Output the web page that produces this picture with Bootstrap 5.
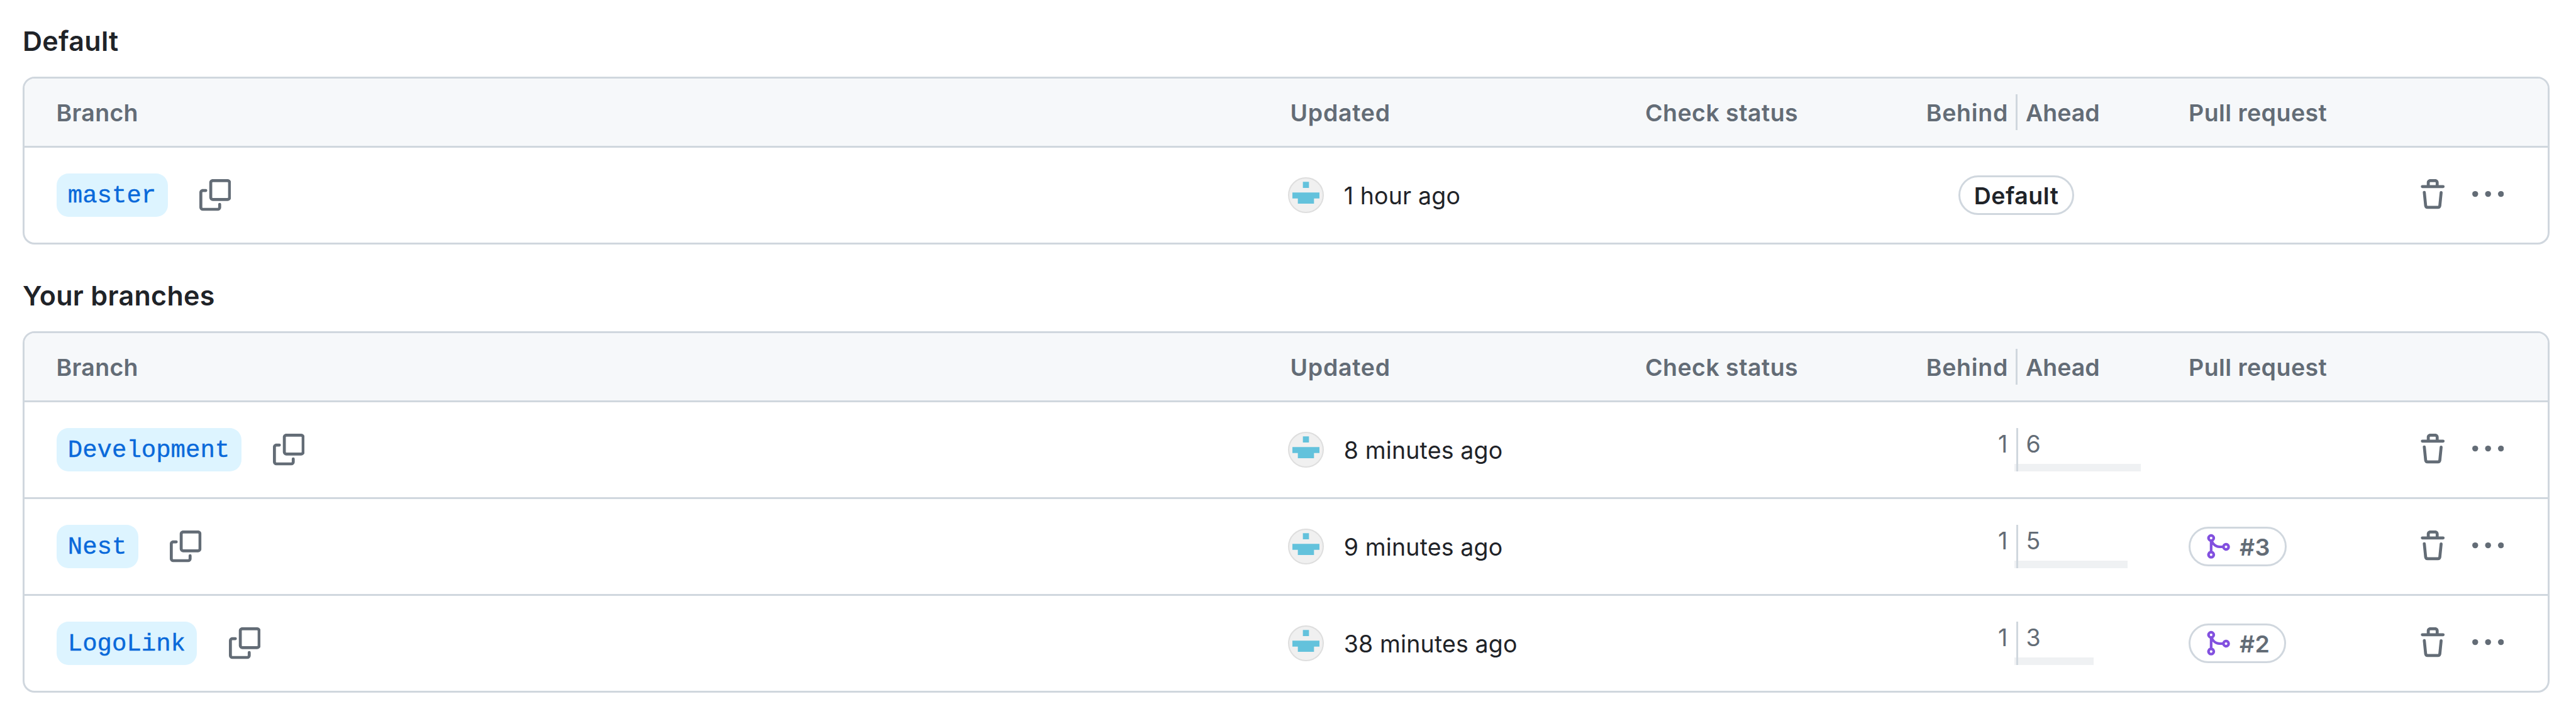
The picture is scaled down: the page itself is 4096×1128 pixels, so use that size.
<!DOCTYPE html>
<html lang="en">
<head>
<meta charset="utf-8">
<meta name="viewport" content="width=device-width, initial-scale=1">
<title>Branches</title>
<link href="https://cdn.jsdelivr.net/npm/bootstrap@5.3.0/dist/css/bootstrap.min.css" rel="stylesheet">
<style>
  :root { --line: #d0d7de; --muted: #636c76; --ink: #1f2328; }
  body { font-family: Inter, "Liberation Sans", sans-serif; font-size: 37.5px; line-height: 50px; letter-spacing: .15px; color: var(--ink); background: #fff; }
  .page { padding: 35px 42px 0 36px; }
  .section-title { font-size: 43px; line-height: 60px; font-weight: 600; letter-spacing: .3px; margin: 0 0 27px; }
  .branch-section + .branch-section { margin-top: 51px; }
  .branch-box { border: 3px solid var(--line); border-radius: 19px; }
  .branch-head { height: 110px; background: #f6f8fa; color: var(--muted); font-weight: 600; letter-spacing: .45px; border-bottom: 3px solid var(--line); }
  .branch-line { height: 151px; }
  .branch-line + .branch-line { height: 154px; border-top: 3px solid var(--line); }
  .c-name { width: 2009px; padding-left: 50.5px; }
  .c-updated { width: 568px; }
  .c-check { width: 316px; }
  .c-compare { width: 548px; }
  .c-pull { width: 363.5px; }
  .branch-head .c-updated { padding-left: 3.5px; letter-spacing: .7px; }
  .branch-head .c-name { letter-spacing: .3px; }
  .cell-text { padding-top: 2px; }
  .chip { font-family: "Liberation Mono", monospace; font-size: 39px; line-height: 50px; letter-spacing: 0; height: 69px; padding: 11px 18.3px 8px; border-radius: 19px; background: #ddf4ff; color: #0969da; text-decoration: none; -webkit-text-stroke: .4px #0969da; }
  .oct { width: 50.4px; height: 50.4px; fill: var(--muted); display: block; flex: none; }
  .copy-btn { margin-left: 50.4px; }
  .oct-merge { width: 44.6px; height: 44.6px; fill: #8250df; margin-right: 12.5px; }
  .who { width: 57px; height: 57px; margin-right: 31.7px; display: block; flex: none; }
  .pill { height: 63px; border: 3px solid var(--line); border-radius: 32px; font-weight: 600; }
  .pill-default { padding: 0 22px; letter-spacing: .5px; }
  .pill-pr { padding: 0 23px 0 21px; color: var(--muted); text-decoration: none; letter-spacing: .3px; }
  .half { width: 274px; }
  .half-right { border-left: 3px solid var(--line); }
  .branch-head .half { height: 57px; line-height: 59px; }
  .branch-head .half-left { width: 273px; padding-right: 12px; letter-spacing: .7px; }
  .branch-head .half-right { padding-left: 13px; letter-spacing: 0; }
  .branch-line .half { height: 69px; color: var(--muted); }
  .num-left { padding-right: 13.5px; padding-top: 1px; }
  .num-right { padding-left: 12.5px; padding-top: 1px; }
  .meter { height: 12.5px; background: #eff1f3; }
  .actions { gap: 37.4px; margin-left: -.5px; }
</style>
<script src="https://cdn.jsdelivr.net/npm/bootstrap@5.3.0/dist/js/bootstrap.bundle.min.js"></script>
</head>
<body>
<svg class="d-none" aria-hidden="true">
  <symbol id="i-copy" viewBox="0 0 16 16"><path d="M0 6.75C0 5.784.784 5 1.75 5h1.5a.75.75 0 0 1 0 1.5h-1.5a.25.25 0 0 0-.25.25v7.5c0 .138.112.25.25.25h7.5a.25.25 0 0 0 .25-.25v-1.5a.75.75 0 0 1 1.5 0v1.5A1.75 1.75 0 0 1 9.25 16h-7.5A1.75 1.75 0 0 1 0 14.25Z"/><path d="M5 1.75C5 .784 5.784 0 6.75 0h7.5C15.216 0 16 .784 16 1.75v7.5A1.75 1.75 0 0 1 14.25 11h-7.5A1.75 1.75 0 0 1 5 9.25Zm1.75-.25a.25.25 0 0 0-.25.25v7.5c0 .138.112.25.25.25h7.5a.25.25 0 0 0 .25-.25v-7.5a.25.25 0 0 0-.25-.25Z"/></symbol>
  <symbol id="i-trash" viewBox="0 0 16 16"><path d="M11 1.75V3h2.25a.75.75 0 0 1 0 1.5H2.75a.75.75 0 0 1 0-1.5H5V1.75C5 .784 5.784 0 6.75 0h2.5C10.216 0 11 .784 11 1.75ZM4.496 6.675l.66 6.6a.25.25 0 0 0 .249.225h5.19a.25.25 0 0 0 .249-.225l.66-6.6a.75.75 0 0 1 1.492.149l-.66 6.6A1.748 1.748 0 0 1 10.595 15h-5.19a1.75 1.75 0 0 1-1.741-1.575l-.66-6.6a.75.75 0 1 1 1.492-.15ZM6.5 1.75V3h3V1.75a.25.25 0 0 0-.25-.25h-2.5a.25.25 0 0 0-.25.25Z"/></symbol>
  <symbol id="i-more" viewBox="0 0 16 16"><circle cx="1.5" cy="7.5" r="1.5"/><circle cx="8" cy="7.5" r="1.5"/><circle cx="14.5" cy="7.5" r="1.5"/></symbol>
  <symbol id="i-merge" viewBox="0 0 16 16"><path d="M5.45 5.154A4.25 4.25 0 0 0 9.25 7.5h1.378a2.251 2.251 0 1 1 0 1.5H9.25A5.734 5.734 0 0 1 5 7.123v3.505a2.25 2.25 0 1 1-1.5 0V5.372a2.25 2.25 0 1 1 1.95-.218ZM4.25 13.5a.75.75 0 1 0 0-1.5.75.75 0 0 0 0 1.5Zm8.5-4.5a.75.75 0 1 0 0-1.5.75.75 0 0 0 0 1.5ZM5 3.25a.75.75 0 1 0-1.5 0 .75.75 0 0 0 1.5 0Z"/></symbol>
  <symbol id="i-who" viewBox="0 0 171 171"><circle cx="85.5" cy="85.5" r="82.5" fill="#f0f0f0" stroke="#dedede" stroke-width="6"/><path fill="#63c2dc" d="M71 22h29v29H71zM21 73h129v28h-26v25H47v-25H21z"/></symbol>
</svg>
<main class="page">
  <section class="branch-section">
    <h2 class="section-title">Default</h2>
    <div class="branch-box overflow-hidden">
      <div class="branch-head d-flex align-items-center">
        <div class="c-name cell-text">Branch</div>
        <div class="c-updated cell-text">Updated</div>
        <div class="c-check cell-text">Check status</div>
        <div class="c-compare d-flex"><div class="half half-left text-end">Behind</div><div class="half half-right">Ahead</div></div>
        <div class="c-pull cell-text">Pull request</div>
      </div>
      <div class="branch-line d-flex align-items-center">
        <div class="c-name d-flex align-items-center"><a class="chip" href="#">master</a><svg class="oct copy-btn"><use href="#i-copy"/></svg></div>
        <div class="c-updated d-flex align-items-center"><svg class="who"><use href="#i-who"/></svg><span class="cell-text">1 hour ago</span></div>
        <div class="c-check"></div>
        <div class="c-compare d-flex justify-content-center"><span class="pill pill-default d-flex align-items-center"><span class="cell-text">Default</span></span></div>
        <div class="c-pull"></div>
        <div class="actions d-flex"><svg class="oct"><use href="#i-trash"/></svg><svg class="oct"><use href="#i-more"/></svg></div>
      </div>
    </div>
  </section>
  <section class="branch-section">
    <h2 class="section-title">Your branches</h2>
    <div class="branch-box overflow-hidden">
      <div class="branch-head d-flex align-items-center">
        <div class="c-name cell-text">Branch</div>
        <div class="c-updated cell-text">Updated</div>
        <div class="c-check cell-text">Check status</div>
        <div class="c-compare d-flex"><div class="half half-left text-end">Behind</div><div class="half half-right">Ahead</div></div>
        <div class="c-pull cell-text">Pull request</div>
      </div>
      <div class="branch-line d-flex align-items-center">
        <div class="c-name d-flex align-items-center"><a class="chip" href="#">Development</a><svg class="oct copy-btn"><use href="#i-copy"/></svg></div>
        <div class="c-updated d-flex align-items-center"><svg class="who"><use href="#i-who"/></svg><span class="cell-text">8 minutes ago</span></div>
        <div class="c-check"></div>
        <div class="c-compare d-flex">
          <div class="half d-flex flex-column justify-content-between align-items-end"><span class="num-left">1</span><div class="meter" style="width:3px"></div></div>
          <div class="half half-right d-flex flex-column justify-content-between"><span class="num-right">6</span><div class="meter" style="width:195px"></div></div>
        </div>
        <div class="c-pull"></div>
        <div class="actions d-flex"><svg class="oct"><use href="#i-trash"/></svg><svg class="oct"><use href="#i-more"/></svg></div>
      </div>
      <div class="branch-line d-flex align-items-center">
        <div class="c-name d-flex align-items-center"><a class="chip" href="#">Nest</a><svg class="oct copy-btn"><use href="#i-copy"/></svg></div>
        <div class="c-updated d-flex align-items-center"><svg class="who"><use href="#i-who"/></svg><span class="cell-text">9 minutes ago</span></div>
        <div class="c-check"></div>
        <div class="c-compare d-flex">
          <div class="half d-flex flex-column justify-content-between align-items-end"><span class="num-left">1</span><div class="meter" style="width:3px"></div></div>
          <div class="half half-right d-flex flex-column justify-content-between"><span class="num-right">5</span><div class="meter" style="width:174px"></div></div>
        </div>
        <div class="c-pull d-flex"><a class="pill pill-pr d-flex align-items-center" href="#"><svg class="oct oct-merge"><use href="#i-merge"/></svg><span class="cell-text">#3</span></a></div>
        <div class="actions d-flex"><svg class="oct"><use href="#i-trash"/></svg><svg class="oct"><use href="#i-more"/></svg></div>
      </div>
      <div class="branch-line d-flex align-items-center">
        <div class="c-name d-flex align-items-center"><a class="chip" href="#">LogoLink</a><svg class="oct copy-btn"><use href="#i-copy"/></svg></div>
        <div class="c-updated d-flex align-items-center"><svg class="who"><use href="#i-who"/></svg><span class="cell-text">38 minutes ago</span></div>
        <div class="c-check"></div>
        <div class="c-compare d-flex">
          <div class="half d-flex flex-column justify-content-between align-items-end"><span class="num-left">1</span><div class="meter" style="width:3px"></div></div>
          <div class="half half-right d-flex flex-column justify-content-between"><span class="num-right">3</span><div class="meter" style="width:120px"></div></div>
        </div>
        <div class="c-pull d-flex"><a class="pill pill-pr d-flex align-items-center" href="#"><svg class="oct oct-merge"><use href="#i-merge"/></svg><span class="cell-text">#2</span></a></div>
        <div class="actions d-flex"><svg class="oct"><use href="#i-trash"/></svg><svg class="oct"><use href="#i-more"/></svg></div>
      </div>
    </div>
  </section>
</main>
</body>
</html>
